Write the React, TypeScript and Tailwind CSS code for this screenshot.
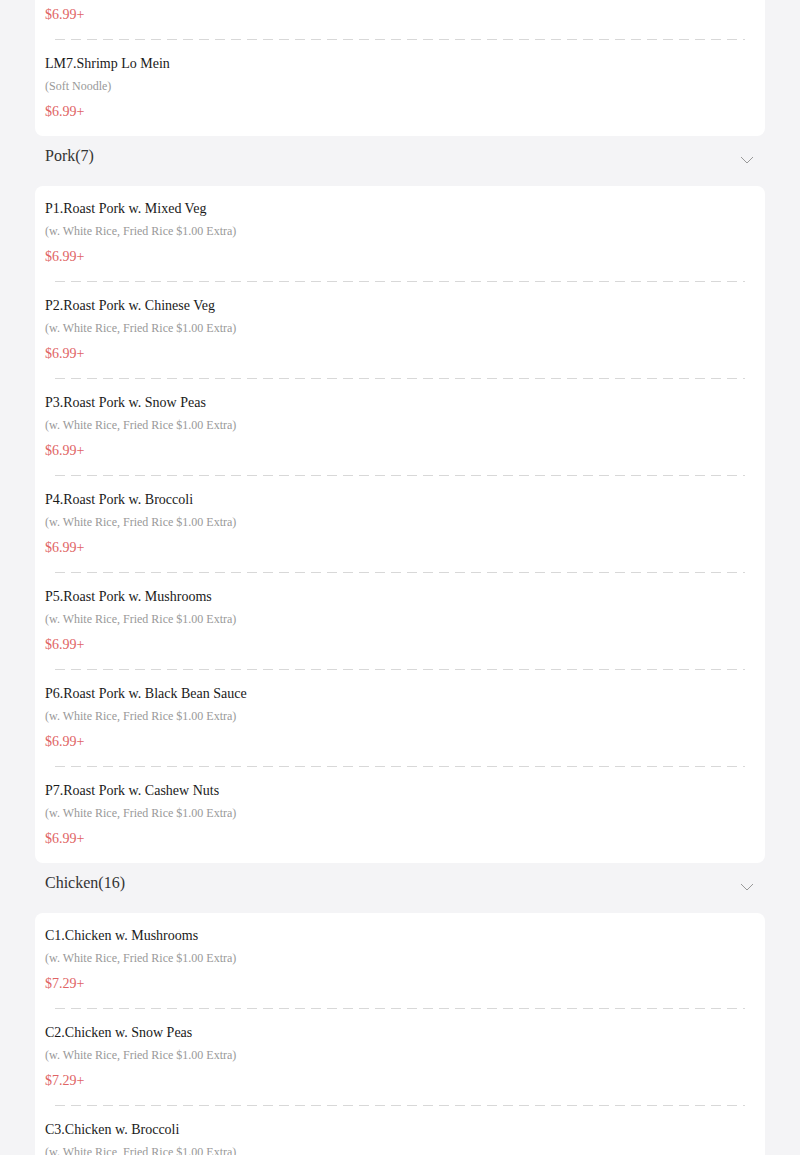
import React from "react";

type Item = { name: string; note: string; price: string };

const riceNote = "(w. White Rice, Fried Rice $1.00 Extra)";

const loMein: Item[] = [
	{ name: "LM6.Chicken Lo Mein", note: "(Soft Noodle)", price: "$6.99+" },
	{ name: "LM7.Shrimp Lo Mein", note: "(Soft Noodle)", price: "$6.99+" },
];

const pork: Item[] = [
	"P1.Roast Pork w. Mixed Veg",
	"P2.Roast Pork w. Chinese Veg",
	"P3.Roast Pork w. Snow Peas",
	"P4.Roast Pork w. Broccoli",
	"P5.Roast Pork w. Mushrooms",
	"P6.Roast Pork w. Black Bean Sauce",
	"P7.Roast Pork w. Cashew Nuts",
].map(name => ({ name, note: riceNote, price: "$6.99+" }));

const chicken: Item[] = [
	"C1.Chicken w. Mushrooms",
	"C2.Chicken w. Snow Peas",
	"C3.Chicken w. Broccoli",
	"C4.Chicken w. Mixed Veg",
].map(name => ({ name, note: riceNote, price: "$7.29+" }));

const Chevron = () => (
	<svg width="14" height="8" viewBox="0 0 14 8" fill="none">
		<path d="M1 1l6 6 6-6" stroke="#999" strokeWidth="1" />
	</svg>
);

const Header = ({ title }: { title: string }) => (
	<div className="flex h-[50px] items-start justify-between pl-[10px] pr-[11px]">
		<span className="mt-[8px] text-[16px] leading-[24px] text-[#333]">{title}</span>
		<span className="mt-[20px]">
			<Chevron />
		</span>
	</div>
);

const Card = ({ items }: { items: Item[] }) => (
	<div className="rounded-[8px] bg-white">
		{items.map((item, i) => (
			<div key={i}>
				<div className="px-[10px] pt-[13px] pb-[14px]">
					<div className="text-[14px] leading-[20px] text-[#1a1a1a]">{item.name}</div>
					<div className="mt-[4px] text-[12px] leading-[16px] text-[#999]">{item.note}</div>
					<div className="mt-[8px] text-[14px] leading-[20px] text-[#e06464]">{item.price}</div>
				</div>
				{i < items.length - 1 && (
					<div className="h-[2px] px-[20px]">
						<div className="h-px bg-[repeating-linear-gradient(to_right,#d8d8d8_0_10px,transparent_10px_16px)]" />
					</div>
				)}
			</div>
		))}
	</div>
);

export default function App() {
	return (
		<div className="h-[1155px] overflow-hidden bg-[#f4f4f6] font-['Liberation_Serif',serif]">
			<div className="-mt-[56px] px-[35px]">
				<Card items={loMein} />
				<Header title="Pork(7)" />
				<Card items={pork} />
				<Header title="Chicken(16)" />
				<Card items={chicken} />
			</div>
		</div>
	);
}
